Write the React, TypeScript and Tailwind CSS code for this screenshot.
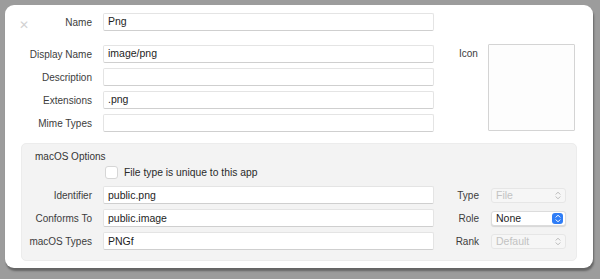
import React from 'react';

function Field({ value }: { value?: string }) {
  return (
    <div className="w-[331px] h-[18px] bg-white border border-[#e4e4e4] border-b-[#cfcfcf] rounded-[2px] flex items-center px-[4px] text-[10.5px] text-[#1d1d1d]">
      {value}
    </div>
  );
}

function Row({ label, value }: { label: string; value?: string }) {
  return (
    <div className="flex items-center gap-[11px]">
      <div className="w-[87px] text-right text-[10px] text-[#3c3c3c]">{label}</div>
      <Field value={value} />
    </div>
  );
}

function Chevrons({ color }: { color: string }) {
  return (
    <svg width="6" height="9" viewBox="0 0 6 9" fill="none" stroke={color} strokeWidth="1" strokeLinecap="round" strokeLinejoin="round">
      <path d="M1 3.2 L3 1.2 L5 3.2" />
      <path d="M1 5.8 L3 7.8 L5 5.8" />
    </svg>
  );
}

function Select({ value, active }: { value: string; active?: boolean }) {
  if (active) {
    return (
      <div className="w-[75px] h-[15px] bg-white rounded-[3px] border border-[#dcdcdc] shadow-[0_1px_1px_rgba(0,0,0,0.12)] flex items-center justify-between pl-[4px] pr-[2px] text-[10.5px] text-[#1d1d1d]">
        <span>{value}</span>
        <div className="w-[11px] h-[11px] rounded-[3px] bg-[#2f7df6] flex items-center justify-center">
          <Chevrons color="#ffffff" />
        </div>
      </div>
    );
  }
  return (
    <div className="w-[75px] h-[15px] bg-[#f6f6f6] rounded-[3px] border border-[#e6e6e6] flex items-center justify-between pl-[4px] pr-[4px] text-[10.5px] text-[#c2c2c2]">
      <span>{value}</span>
      <Chevrons color="#b8b8b8" />
    </div>
  );
}

export default function App() {
  return (
    <div className="w-[600px] h-[279px] bg-[#9c9c9c] pt-[5px] pl-[5px]" style={{ fontFamily: '"Liberation Sans", Arial, sans-serif' }}>
      <div className="w-[588px] h-[263px] bg-white rounded-[9px] shadow-[1px_3px_2px_rgba(0,0,0,0.35)] relative pt-[8px]">
        <div className="absolute left-[14px] top-[14px] text-[12px] leading-none text-[#d2d2d2]">✕</div>

        <div className="flex">
          <div className="flex flex-col">
            <Row label="Name" value="Png" />
            <div className="flex flex-col gap-[5px] mt-[14px]">
              <Row label="Display Name" value="image/png" />
              <Row label="Description" />
              <Row label="Extensions" value=".png" />
              <Row label="Mime Types" />
            </div>
          </div>
          <div className="flex mt-[31px] ml-[25px]">
            <div className="text-[10px] text-[#3c3c3c] mt-[2px]">Icon</div>
            <div className="w-[87px] h-[87px] border border-[#d4d4d4] bg-[#fdfdfd] ml-[10px] rounded-[1px]" />
          </div>
        </div>

        <div className="ml-[16px] mt-[11px] w-[556px] h-[118px] bg-[#f3f3f3] rounded-[5px] border border-[#ececec] pt-[5px]">
          <div className="ml-[13px] text-[10px] text-[#333333]">macOS Options</div>
          <div className="flex items-center ml-[83px] mt-[1px] gap-[6px]">
            <div className="w-[13px] h-[13px] bg-white border border-[#d6d6d6] rounded-[3px]" />
            <span className="text-[10.3px] text-[#2a2a2a]">File type is unique to this app</span>
          </div>
          <div className="flex flex-col gap-[5px] mt-[6px] -ml-[17px]">
            {[
              { label: 'Identifier', value: 'public.png', side: 'Type', sel: 'File', active: false },
              { label: 'Conforms To', value: 'public.image', side: 'Role', sel: 'None', active: true },
              { label: 'macOS Types', value: 'PNGf', side: 'Rank', sel: 'Default', active: false },
            ].map((r) => (
              <div key={r.label} className="flex items-center">
                <Row label={r.label} value={r.value} />
                <div className="w-[45px] text-right text-[10px] text-[#3c3c3c]">{r.side}</div>
                <div className="ml-[12px]">
                  <Select value={r.sel} active={r.active} />
                </div>
              </div>
            ))}
          </div>
        </div>
      </div>
    </div>
  );
}
